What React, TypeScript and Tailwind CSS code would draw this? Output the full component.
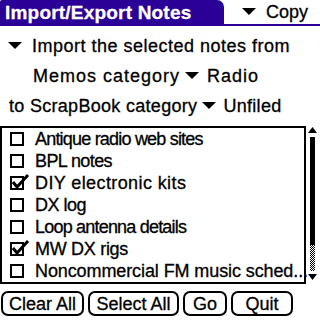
import React from "react";

const PURPLE = "#2b0096";

function Tri({ className = "" }: { className?: string }) {
  return (
    <svg width="14" height="8" viewBox="0 0 14 8" className={`shrink-0 ${className}`}>
      <polygon points="0,0 14,0 7,7" fill="black" />
    </svg>
  );
}

function Box({ checked }: { checked: boolean }) {
  return (
    <svg width="22" height="18" viewBox="0 0 22 18" className="shrink-0">
      <rect x="1" y="3" width="12" height="12" fill="none" stroke="black" strokeWidth="2" />
      {checked && (
        <path d="M3 8 L7 13 L18 1" fill="none" stroke="black" strokeWidth="3" />
      )}
    </svg>
  );
}

const items: [string, boolean, string][] = [
  ["Antique radio web sites", false, "tracking-[-0.8px]"],
  ["BPL notes", false, "tracking-[-0.6px]"],
  ["DIY electronic kits", true, "tracking-[0.4px]"],
  ["DX log", false, "tracking-[-0.5px]"],
  ["Loop antenna details", false, "tracking-[-0.8px]"],
  ["MW DX rigs", true, "tracking-[-0.3px]"],
  ["Noncommercial FM music sched...", false, "tracking-[-0.1px]"],
];

function Scrollbar() {
  return (
    <svg width="14" height="158" viewBox="0 0 14 158">
      <defs>
        <pattern id="chk" width="2" height="2" patternUnits="userSpaceOnUse">
          <rect x="0" y="0" width="1" height="1" fill="black" />
          <rect x="1" y="1" width="1" height="1" fill="black" />
        </pattern>
      </defs>
      <polygon points="5.5,1 1,7 10,7" fill="black" />
      <rect x="3" y="11" width="5" height="108" fill="black" />
      <rect x="3" y="119" width="5" height="26" fill="url(#chk)" />
      <polygon points="1,148 10,148 5.5,154" fill="black" />
    </svg>
  );
}

function Btn({ label, w }: { label: string; w: string }) {
  return (
    <div
      className={`${w} h-[25px] border-2 border-black rounded-[7px] flex items-center justify-center`}
    >
      {label}
    </div>
  );
}

export default function App() {
  return (
    <div
      className="w-[320px] h-[320px] bg-white text-black overflow-hidden text-[18px] leading-none [-webkit-text-stroke:0.3px]"
      style={{ fontFamily: '"Liberation Sans", Arial, sans-serif' }}
    >
      <div className="flex h-[26px] border-b-2 border-[#2b0096]">
        <div
          className="w-[224px] h-[24px] rounded-tr-[7px] rounded-tl-[2px] flex items-center pl-[5px] text-white font-bold text-[19px] tracking-[0.2px]"
          style={{ background: PURPLE }}
        >
          Import/Export Notes
        </div>
        <div className="flex items-center pl-[18px] gap-[10px]">
          <Tri />
          <span>Copy</span>
        </div>
      </div>
      <div className="h-[30px] mt-[5px] flex items-center pl-[8px] gap-[10px]">
        <Tri />
        <span className="tracking-[0.5px] whitespace-nowrap">Import the selected notes from</span>
      </div>
      <div className="h-[30px] flex items-center pl-[33px]">
        <span className="tracking-[1px] whitespace-nowrap">Memos category</span>
        <Tri className="ml-[5px] mr-[8px]" />
        <span className="tracking-[1px]">Radio</span>
      </div>
      <div className="h-[30px] flex items-center pl-[9px]">
        <span className="tracking-[0.3px] whitespace-nowrap">to ScrapBook category</span>
        <Tri className="ml-[5px] mr-[7px]" />
        <span className="tracking-[0.3px]">Unfiled</span>
      </div>
      <div className="flex mt-[5px]">
        <div className="w-[306px] h-[158px] border-2 border-black flex flex-col">
          {items.map(([t, c, tr]) => (
            <div key={t} className="h-[22px] flex items-center pl-[8px] gap-[3px]">
              <Box checked={c} />
              <span className={`whitespace-nowrap ${tr}`}>{t}</span>
            </div>
          ))}
        </div>
        <div className="ml-[1px]">
          <Scrollbar />
        </div>
      </div>
      <div className="flex gap-[4px] mt-[7px] pl-[1px]">
        <Btn label="Clear All" w="w-[83px]" />
        <Btn label="Select All" w="w-[91px]" />
        <Btn label="Go" w="w-[44px]" />
        <Btn label="Quit" w="w-[62px]" />
      </div>
    </div>
  );
}
